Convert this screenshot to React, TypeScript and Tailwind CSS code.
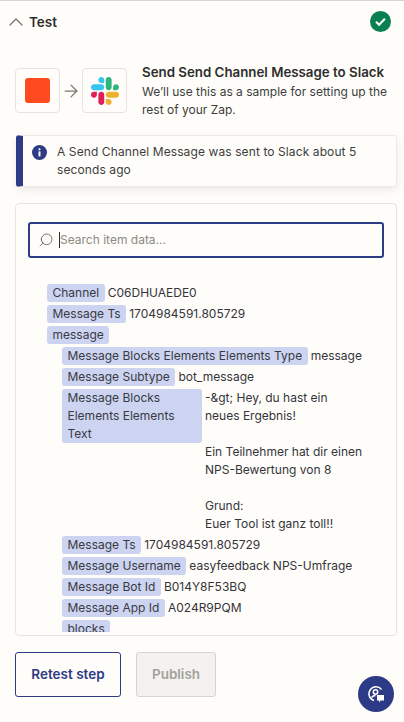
import { ChevronUp, ArrowRight, Search } from "lucide-react";

const Row = ({ label, value, nested, wrapLabel }: { label: string; value?: string; nested?: boolean; wrapLabel?: boolean }) => (
  <div className={`flex items-start gap-[3px] mb-[3px] ${nested ? "pl-[15px]" : ""}`}>
    <span className={`bg-[#ccd4f1] rounded-[3px] px-[5.5px] leading-[18px] text-[#3a3a42] shrink-0 ${wrapLabel ? "w-[140px]" : ""}`}>
      {label}
    </span>
    {value && <span className={`leading-[18px] text-[#34343c] whitespace-pre-line ${wrapLabel ? "max-w-[160px]" : "whitespace-nowrap"}`}>{value}</span>}
  </div>
);

const SlackLogo = () => (
  <svg width="28" height="28" viewBox="0 0 122.8 122.8">
    <path d="M25.8 77.6c0 7.1-5.8 12.9-12.9 12.9S0 84.7 0 77.6s5.8-12.9 12.9-12.9h12.9v12.9zm6.5 0c0-7.1 5.8-12.9 12.9-12.9s12.9 5.8 12.9 12.9v32.3c0 7.1-5.8 12.9-12.9 12.9s-12.9-5.8-12.9-12.9V77.6z" fill="#e01e5a" />
    <path d="M45.2 25.8c-7.1 0-12.9-5.8-12.9-12.9S38.1 0 45.2 0s12.9 5.8 12.9 12.9v12.9H45.2zm0 6.5c7.1 0 12.9 5.8 12.9 12.9s-5.8 12.9-12.9 12.9H12.9C5.8 58.1 0 52.3 0 45.2s5.8-12.9 12.9-12.9h32.3z" fill="#36c5f0" />
    <path d="M97 45.2c0-7.1 5.8-12.9 12.9-12.9s12.9 5.8 12.9 12.9-5.8 12.9-12.9 12.9H97V45.2zm-6.5 0c0 7.1-5.8 12.9-12.9 12.9s-12.9-5.8-12.9-12.9V12.9C64.7 5.8 70.5 0 77.6 0s12.9 5.8 12.9 12.9v32.3z" fill="#2eb67d" />
    <path d="M77.6 97c7.1 0 12.9 5.8 12.9 12.9s-5.8 12.9-12.9 12.9-12.9-5.8-12.9-12.9V97h12.9zm0-6.5c-7.1 0-12.9-5.8-12.9-12.9s5.8-12.9 12.9-12.9h32.3c7.1 0 12.9 5.8 12.9 12.9s-5.8 12.9-12.9 12.9H77.6z" fill="#ecb22e" />
  </svg>
);

export default function App() {
  return (
    <div className="h-[722px] w-[404px] overflow-hidden relative bg-[#fffdf9] border-t border-[#d6d4d0] text-[#2d2e2e]" style={{ fontFamily: "Inter, 'Liberation Sans', sans-serif" }}>
      {/* Header */}
      <div className="flex items-center justify-between h-[42px] pl-[4px] pr-[13px]">
        <div className="flex items-center gap-[1px]">
          <ChevronUp size={24} color="#77766f" strokeWidth={1.25} />
          <span className="text-[13.5px] font-semibold">Test</span>
        </div>
        <svg width="21" height="21" viewBox="0 0 21 21" className="-mt-[2px]">
          <circle cx="10.5" cy="10.5" r="10.5" fill="#0a7f4f" />
          <path d="M6 10.8l3.1 3 5.8-6" fill="none" stroke="#fff" strokeWidth="2.2" />
        </svg>
      </div>

      {/* Step summary */}
      <div className="flex pl-[15px] pr-[8px] mt-[25px]">
        <div className="w-[45px] h-[45px] shrink-0 border border-[#e6e4df] rounded-[4px] flex items-center justify-center">
          <div className="w-[25px] h-[25px] rounded-[3px] bg-[#ff4a1f]" />
        </div>
        <div className="w-[22px] shrink-0 flex items-center justify-center h-[45px]">
          <ArrowRight size={20} color="#77766f" strokeWidth={1.5} />
        </div>
        <div className="w-[45px] h-[45px] shrink-0 border border-[#e6e4df] rounded-[4px] flex items-center justify-center">
          <SlackLogo />
        </div>
        <div className="ml-[15px] -mt-[5px] w-[248px]">
          <div className="text-[13.3px] leading-[18px] font-semibold whitespace-nowrap">Send Send Channel Message to Slack</div>
          <div className="text-[12px] leading-[18px] mt-[2px] text-[#3d3d3d]">We’ll use this as a sample for setting up the rest of your Zap.</div>
        </div>
      </div>

      {/* Alert */}
      <div className="ml-[16px] mr-[7px] mt-[16px] h-[52px] flex rounded-[3px] border border-[#eceae5] border-l-[7px] border-l-[#2d3a85] shadow-[0_3px_8px_rgba(0,0,0,0.08)] pl-[9px] pt-[7px] pr-[8px]">
        <svg width="15" height="15" viewBox="0 0 15 15" className="shrink-0 mt-[2px]">
          <circle cx="7.5" cy="7.5" r="7.5" fill="#2d3a85" />
          <circle cx="7.5" cy="4.3" r="1.1" fill="#fffdf9" />
          <rect x="6.5" y="6.4" width="2" height="5" fill="#fffdf9" />
        </svg>
        <div className="ml-[10px] text-[12px] leading-[18px] tracking-[0.1px] text-[#3d3d3d]">A Send Channel Message was sent to Slack about 5 seconds ago</div>
      </div>

      {/* Data panel */}
      <div className="ml-[15px] mr-[7px] mt-[16px] h-[433px] border border-[#e6e4df] rounded-[4px] pt-[18px] px-[12px] overflow-hidden">
        <div className="h-[36px] border-2 border-[#2d3a85] rounded-[3px] flex items-center pl-[8px]">
          <Search size={16} color="#77766f" strokeWidth={1.5} className="-scale-x-100" />
          <div className="w-px h-[16px] bg-[#2d2e2e] ml-[5px]" />
          <span className="text-[12px] text-[#8b8a85]">Search item data...</span>
        </div>
        <div className="h-[348px] overflow-hidden mt-[26px] pl-[19px] text-[12px]">
          <Row label="Channel" value="C06DHUAEDE0" />
          <Row label="Message Ts" value="1704984591.805729" />
          <Row label="message" />
          <Row nested label="Message Blocks Elements Elements Type" value="message" />
          <Row nested label="Message Subtype" value="bot_message" />
          <Row nested wrapLabel label="Message Blocks Elements Elements Text" value={"-&gt; Hey, du hast ein neues Ergebnis!\n\nEin Teilnehmer hat dir einen NPS-Bewertung von 8\n\nGrund:\nEuer Tool ist ganz toll!!"} />
          <Row nested label="Message Ts" value="1704984591.805729" />
          <Row nested label="Message Username" value="easyfeedback NPS-Umfrage" />
          <Row nested label="Message Bot Id" value="B014Y8F53BQ" />
          <Row nested label="Message App Id" value="A024R9PQM" />
          <Row nested label="blocks" />
        </div>
      </div>

      {/* Actions */}
      <div className="flex gap-[15px] pl-[15px] mt-[16px]">
        <button className="w-[106px] h-[45px] border border-[#2d3a85] rounded-[3px] text-[13.5px] font-semibold text-[#2d3a85]">Retest step</button>
        <button className="w-[80px] h-[45px] border border-[#d6d4d0] rounded-[3px] bg-[#f4f2ef] text-[13.5px] font-semibold text-[#a3a19c]">Publish</button>
      </div>

      {/* Help button */}
      <div className="absolute left-[358px] top-[675px] w-[36px] h-[36px] rounded-full bg-[#2d3a85] flex items-center justify-center">
        <svg width="20" height="20" viewBox="0 0 20 20" fill="none" stroke="#fff" strokeWidth="1.5">
          <path d="M15.5 5.5A7 7 0 1 0 8 16.5" />
          <circle cx="9.5" cy="8" r="2.2" />
          <path d="M5.5 13.5c1-1.3 2.5-2 4-2" />
          <path d="M11 11h7v5.5h-3.5l-1.5 2v-2h-2z" fill="#fff" stroke="none" />
        </svg>
      </div>
    </div>
  );
}
